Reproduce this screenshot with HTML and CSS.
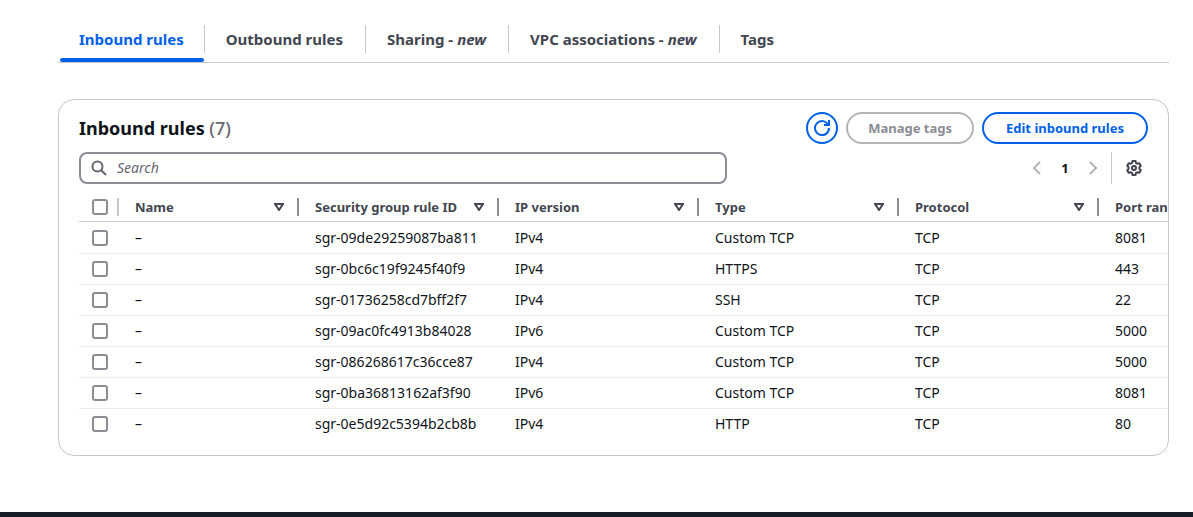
FILE: index.html
```html
<!DOCTYPE html>
<html lang="en">
<head>
<meta charset="utf-8">
<title>Security group - Inbound rules</title>
<link rel="stylesheet" href="styles.css">
</head>
<body>
<main class="page">
  <nav class="tabs" aria-label="Security group details">
    <a class="tab tab-active" href="#inbound" aria-current="page">Inbound rules</a>
    <a class="tab" href="#outbound">Outbound rules</a>
    <a class="tab" href="#sharing">Sharing - <em>new</em></a>
    <a class="tab" href="#vpc">VPC associations - <em>new</em></a>
    <a class="tab" href="#tags">Tags</a>
  </nav>

  <section class="card" id="inbound">
    <header class="card-header">
      <h2 class="title">Inbound rules <span class="count">(7)</span></h2>
      <div class="actions">
        <button class="button button-icon" type="button" aria-label="Refresh">
          <svg class="icon" viewBox="0 0 16 16"><path d="M10 5h5V0"/><path d="M15 8a7 7 0 1 1-.7-3"/></svg>
        </button>
        <button class="button" type="button" disabled>Manage tags</button>
        <button class="button button-wide" type="button">Edit inbound rules</button>
      </div>
    </header>

    <div class="tools">
      <label class="search">
        <svg class="icon" viewBox="0 0 16 16"><circle cx="6.5" cy="6.5" r="5"/><path d="M10.2 10.2 15 15"/></svg>
        <input class="search-input" type="search" placeholder="Search" aria-label="Search">
      </label>
      <div class="pager">
        <button class="page-button" type="button" aria-label="Previous page" disabled><svg class="icon" viewBox="0 0 16 16"><path d="M11 2 5 8l6 6"/></svg></button>
        <button class="page-button page-current" type="button" aria-current="page">1</button>
        <button class="page-button" type="button" aria-label="Next page" disabled><svg class="icon" viewBox="0 0 16 16"><path d="m5 2 6 6-6 6"/></svg></button>
        <button class="page-button settings" type="button" aria-label="Preferences"><svg class="icon icon-round" viewBox="0 0 16 16"><path d="M6.5 1h3l.5 2 1.3.7 2-.5 1.5 2.6-1.4 1.4v1.600l1.400 1.400-1.500 2.600-2-.5-1.300.7-.5 2h-3l-.5-2-1.300-.7-2 .5-1.500-2.600 1.400-1.400V7.200L1.200 5.800l1.500-2.600 2 .5L6 3z"/><circle cx="8" cy="8" r="2"/></svg></button>
      </div>
    </div>

    <div class="table-scroll">
      <table class="table">
        <colgroup><col class="col-select"><col class="col-name"><col class="col"><col class="col"><col class="col"><col class="col"><col class="col"></colgroup>
        <thead>
          <tr>
            <th class="select"><input class="check" type="checkbox" aria-label="Select all rules"></th>
            <th><div class="head">Name<svg class="sort" viewBox="0 0 10 8"><path d="M1 1h8L5 7z"/></svg></div></th>
            <th><div class="head">Security group rule ID<svg class="sort" viewBox="0 0 10 8"><path d="M1 1h8L5 7z"/></svg></div></th>
            <th><div class="head">IP version<svg class="sort" viewBox="0 0 10 8"><path d="M1 1h8L5 7z"/></svg></div></th>
            <th><div class="head">Type<svg class="sort" viewBox="0 0 10 8"><path d="M1 1h8L5 7z"/></svg></div></th>
            <th><div class="head">Protocol<svg class="sort" viewBox="0 0 10 8"><path d="M1 1h8L5 7z"/></svg></div></th>
            <th><div class="head">Port range<svg class="sort" viewBox="0 0 10 8"><path d="M1 1h8L5 7z"/></svg></div></th>
          </tr>
        </thead>
        <tbody>
          <tr><td class="select"><input class="check" type="checkbox" aria-label="Select sgr-09de29259087ba811"></td><td>–</td><td>sgr-09de29259087ba811</td><td>IPv4</td><td>Custom TCP</td><td>TCP</td><td>8081</td></tr>
          <tr><td class="select"><input class="check" type="checkbox" aria-label="Select sgr-0bc6c19f9245f40f9"></td><td>–</td><td>sgr-0bc6c19f9245f40f9</td><td>IPv4</td><td>HTTPS</td><td>TCP</td><td>443</td></tr>
          <tr><td class="select"><input class="check" type="checkbox" aria-label="Select sgr-01736258cd7bff2f7"></td><td>–</td><td>sgr-01736258cd7bff2f7</td><td>IPv4</td><td>SSH</td><td>TCP</td><td>22</td></tr>
          <tr><td class="select"><input class="check" type="checkbox" aria-label="Select sgr-09ac0fc4913b84028"></td><td>–</td><td>sgr-09ac0fc4913b84028</td><td>IPv6</td><td>Custom TCP</td><td>TCP</td><td>5000</td></tr>
          <tr><td class="select"><input class="check" type="checkbox" aria-label="Select sgr-086268617c36cce87"></td><td>–</td><td>sgr-086268617c36cce87</td><td>IPv4</td><td>Custom TCP</td><td>TCP</td><td>5000</td></tr>
          <tr><td class="select"><input class="check" type="checkbox" aria-label="Select sgr-0ba36813162af3f90"></td><td>–</td><td>sgr-0ba36813162af3f90</td><td>IPv6</td><td>Custom TCP</td><td>TCP</td><td>8081</td></tr>
          <tr><td class="select"><input class="check" type="checkbox" aria-label="Select sgr-0e5d92c5394b2cb8b"></td><td>–</td><td>sgr-0e5d92c5394b2cb8b</td><td>IPv4</td><td>HTTP</td><td>TCP</td><td>80</td></tr>
        </tbody>
      </table>
    </div>
  </section>
</main>
<footer class="footer"></footer>
</body>
</html>
```
FILE: styles.css
```css
* { box-sizing: border-box; }

body {
  margin: 0;
  min-height: 100vh;
  display: flex;
  flex-direction: column;
  background: #fff;
  color: #0f141a;
  font-family: "Noto Sans", "Open Sans", sans-serif;
  font-size: 13px;
  line-height: 20px;
}

button, input { font: inherit; }

.page {
  flex: 1;
  padding: 24px 24px 0 58px;
}

.icon {
  display: block;
  width: 16px;
  height: 16px;
  flex: none;
  fill: none;
  stroke: currentColor;
  stroke-width: 2;
}

.icon-round { stroke-linejoin: round; }

.tabs {
  display: flex;
  padding-left: 1px;
  border-bottom: 1px solid #c6c6cd;
}

.tab {
  display: flex;
  align-items: center;
  gap: 4px;
  position: relative;
  height: 38px;
  padding: 0 20px 8px;
  color: #424650;
  font-size: 15px;
  font-weight: 700;
  text-decoration: none;
}

.tab + .tab { padding: 0 22px 8px; }

.tab + .tab::before {
  content: "";
  position: absolute;
  left: 0;
  top: 1px;
  width: 1px;
  height: 28px;
  background: #c6c6cd;
}

.tab-active { color: #0060e8; }

.tab-active::after {
  content: "";
  position: absolute;
  left: 1px;
  right: 0;
  bottom: 0;
  height: 4px;
  border-radius: 2px;
  background: #0060e8;
}

.card {
  margin-top: 36px;
  padding: 12px 0 15px 20px;
  border: 1px solid #c6c6cd;
  border-radius: 16px;
  overflow: hidden;
}

.card-header, .tools {
  display: flex;
  align-items: center;
  justify-content: space-between;
  padding-right: 20px;
}

.title {
  margin: 0;
  font-size: 18px;
  font-weight: 700;
}

.count { color: #656871; font-weight: 500; }

.actions { display: flex; gap: 8px; }

.button {
  height: 32px;
  padding: 0 20px;
  border: 2px solid #0060e8;
  border-radius: 16px;
  background: #fff;
  color: #0060e8;
  font-weight: 700;
}

.button:disabled { border-color: #b4b4bb; color: #8c8c94; }

.button-icon { width: 32px; padding: 0 6px; }

.button-wide { min-width: 166px; }

.tools { margin-top: 8px; gap: 24px; }

.search {
  display: flex;
  align-items: center;
  gap: 10px;
  flex: 0 1 648px;
  height: 32px;
  padding: 0 10px;
  border: 2px solid #8c8c94;
  border-radius: 8px;
  color: #656871;
}

.search-input {
  flex: 1;
  min-width: 0;
  padding: 0;
  border: 0;
  outline: 0;
  background: none;
  color: #0f141a;
  font-size: 14px;
}

.search-input::placeholder { color: #656871; font-style: italic; }

.pager { display: flex; align-items: center; }

.page-button {
  display: flex;
  align-items: center;
  justify-content: center;
  width: 28px;
  height: 32px;
  padding: 0;
  border: 0;
  background: none;
  color: #424650;
}

.page-button:disabled { color: #b4b4bb; }

.page-current { color: #0f141a; font-weight: 700; }

.settings {
  width: 37px;
  margin-left: 4px;
  padding-left: 8px;
  border-left: 1px solid #c6c6cd;
}

.table-scroll { margin-top: 8px; overflow: hidden; }

.table {
  width: 1220px;
  table-layout: fixed;
  border-collapse: separate;
  border-spacing: 0;
}

.col-select { width: 40px; }
.col-name { width: 180px; }
.col { width: 200px; }

.table th, .table td {
  height: 31px;
  padding: 0 16px;
  border-bottom: 1px solid #ebebf0;
  text-align: left;
  white-space: nowrap;
}

.table td { font-size: 14px; }

.table th {
  height: 30px;
  padding: 0;
  border-bottom-color: #c6c6cd;
  color: #424650;
  font-weight: 700;
}

.table tbody tr:first-child td { height: 32px; }
.table tbody tr:last-child td { border-bottom-color: transparent; }

.head {
  display: flex;
  align-items: center;
  justify-content: space-between;
  height: 18px;
  padding: 0 13px 0 16px;
  border-right: 2px solid #8c8c94;
}

.sort {
  width: 10px;
  height: 8px;
  fill: none;
  stroke: currentColor;
  stroke-width: 2;
}

.table .select { padding: 0 0 0 13px; }

.table th.select {
  background: linear-gradient(#c6c6cd, #c6c6cd) right 0 center / 2px 18px no-repeat;
}

.check {
  appearance: none;
  display: block;
  width: 16px;
  height: 16px;
  margin: 0;
  border: 2px solid #8c8c94;
  border-radius: 3px;
  background: #fff;
}

.check:checked { border-color: #0060e8; background: #0060e8; }

.footer { height: 5px; background: #161d26; }
```
